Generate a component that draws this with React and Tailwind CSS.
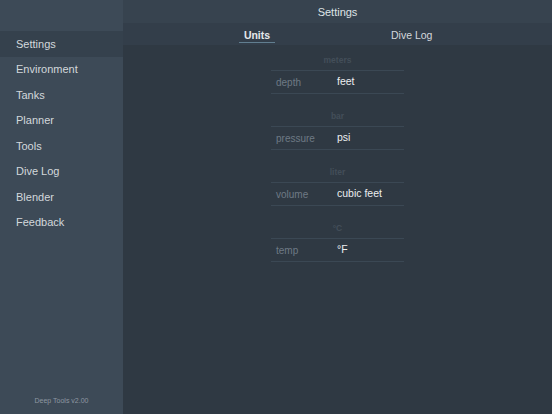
const menu = ['Settings', 'Environment', 'Tanks', 'Planner', 'Tools', 'Dive Log', 'Blender', 'Feedback'];

const units = [
  { alt: 'meters', label: 'depth', value: 'feet' },
  { alt: 'bar', label: 'pressure', value: 'psi' },
  { alt: 'liter', label: 'volume', value: 'cubic feet' },
  { alt: '°C', label: 'temp', value: '°F' },
];

export default function App() {
  return (
    <div className="flex h-[414px] w-[552px] overflow-hidden font-['Liberation_Sans',sans-serif] bg-[#2f3943]">
      <aside className="flex w-[123px] shrink-0 flex-col bg-[#3d4a57]">
        <div className="h-[31px]" />
        {menu.map((item, i) => (
          <div
            key={item}
            className={`flex h-[25.5px] items-center pl-4 text-[11px] text-[#d3d8dc] ${i === 0 ? 'bg-[#35414d]' : ''}`}
          >
            {item}
          </div>
        ))}
        <div className="mt-auto pb-[8px] text-center text-[7px] text-[#8d97a1]">Deep Tools v2.00</div>
      </aside>

      <main className="flex flex-1 flex-col">
        <div className="flex h-[23px] items-center justify-center pt-[1px] bg-[#37434f] text-[11px] text-[#dfe3e6]">
          Settings
        </div>
        <div className="flex h-[22px] pt-[3px] bg-[#333e4a]">
          <div className="flex w-[268px] justify-center">
            <div className="relative flex items-center px-1 text-[10.5px] font-bold text-[#e6e9eb]">
              Units
              <span className="absolute bottom-[2px] left-[-1px] right-[-1px] h-[1px] bg-[#617e90]" />
            </div>
          </div>
          <div className="flex items-center text-[10.5px] text-[#d3d8dc]">Dive Log</div>
        </div>

        <div className="flex flex-col items-center pt-[9px]">
          {units.map((u) => (
            <div key={u.label} className="mb-[16px] w-[133px]">
              <div className="h-[16px] text-center text-[8.5px] font-bold leading-[12px] text-[#434e59]">{u.alt}</div>
              <div className="flex h-[24px] items-center border-y border-[#3b4854]">
                <span className="w-[66px] pl-[5px] text-[10px] text-[#6e7a85]">{u.label}</span>
                <span className="text-[10.5px] text-[#eceef0]">{u.value}</span>
              </div>
            </div>
          ))}
        </div>
      </main>
    </div>
  );
}
